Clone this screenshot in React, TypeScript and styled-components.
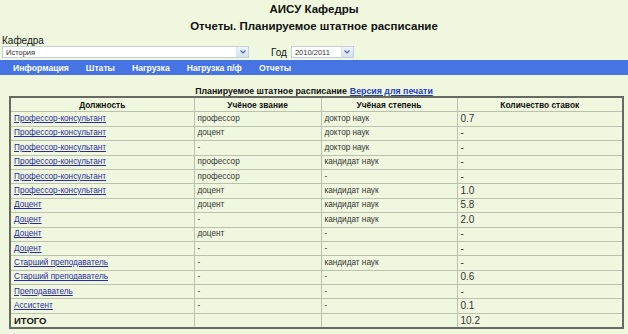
import styled, { createGlobalStyle } from 'styled-components';

const GlobalStyle = createGlobalStyle`
	html, body {
		margin: 0;
		padding: 0;
		background: #eff8de;
	}
	body {
		font-family: 'Liberation Sans', Arial, sans-serif;
		color: #222;
	}
`;

const Page = styled.div`
	width: 628px;
	height: 334px;
	overflow: hidden;
	background: #eff8de;
`;

const Title = styled.h1<{ $top: number }>`
	margin: ${(p) => p.$top}px 0 0;
	font-size: 11.5px;
	line-height: 14px;
	font-weight: bold;
	text-align: center;
	color: #111;
`;

const Filters = styled.div`
	display: flex;
	align-items: flex-end;
	gap: 22px;
	padding: 2px 0 0 2px;
`;

const Field = styled.div`
	display: flex;
	flex-direction: column;
`;

const InlineField = styled.div`
	display: flex;
	align-items: center;
	gap: 4px;
`;

const Label = styled.span`
	font-size: 10px;
	line-height: 11px;
	color: #111;
`;

const Select = styled.div<{ $width: number }>`
	width: ${(p) => p.$width}px;
	height: 12px;
	box-sizing: border-box;
	border: 1px solid #c4cfd8;
	background: #fff;
	display: flex;
	align-items: center;
	font-size: 7.5px;
	color: #333;
	padding-left: 3px;
	span {
		flex: 1;
	}
`;

const Arrow = styled.div`
	width: 11px;
	height: 10px;
	background: linear-gradient(#eef3fb, #d6e0f0);
	border-left: 1px solid #dde4ee;
	display: flex;
	align-items: center;
	justify-content: center;
	svg {
		display: block;
	}
`;

const Nav = styled.nav`
	margin-top: 2px;
	height: 15px;
	background: #4674e2;
	display: flex;
	align-items: center;
	gap: 17px;
	padding-left: 13px;
`;

const NavItem = styled.a`
	color: #fff;
	font-size: 8.6px;
	font-weight: bold;
	text-decoration: none;
`;

const Caption = styled.div`
	margin-top: 11px;
	text-align: center;
	font-size: 8.8px;
	line-height: 10px;
	font-weight: bold;
	color: #111;
	a {
		color: #1f3fc4;
		text-decoration: underline;
		margin-left: 3px;
	}
`;

const Table = styled.table`
	margin: 0 0 0 9px;
	width: 615px;
	border-collapse: collapse;
	border: 2px solid #666a60;
	table-layout: fixed;
	th,
	td {
		border: 1px solid #b9c2ae;
		height: 13.4px;
		padding: 0 3px;
		font-size: 8.2px;
		line-height: 12px;
		white-space: nowrap;
		overflow: hidden;
	}
	th {
		font-weight: bold;
		text-align: center;
		color: #111;
		font-size: 8.4px;
	}
	td {
		color: #333;
	}
	td a {
		color: #2a2aa6;
		text-decoration: underline;
	}
`;

const Num = styled.td`
	&& {
		font-size: 10px;
	}
`;

const Total = styled.td`
	&& {
		font-weight: bold;
		color: #111;
		font-size: 9.5px;
	}
`;

const rows: [string, string, string, string][] = [
	['Профессор-консультант', 'профессор', 'доктор наук', '0.7'],
	['Профессор-консультант', 'доцент', 'доктор наук', '-'],
	['Профессор-консультант', '-', 'доктор наук', '-'],
	['Профессор-консультант', 'профессор', 'кандидат наук', '-'],
	['Профессор-консультант', 'профессор', '-', '-'],
	['Профессор-консультант', 'доцент', 'кандидат наук', '1.0'],
	['Доцент', 'доцент', 'кандидат наук', '5.8'],
	['Доцент', '-', 'кандидат наук', '2.0'],
	['Доцент', 'доцент', '-', '-'],
	['Доцент', '-', '-', '-'],
	['Старший преподаватель', '-', 'кандидат наук', '-'],
	['Старший преподаватель', '-', '-', '0.6'],
	['Преподаватель', '-', '-', '-'],
	['Ассистент', '-', '-', '0.1'],
];

const ArrowIcon = () => (
	<Arrow>
		<svg width='6' height='4' viewBox='0 0 6 4'>
			<path d='M0.5 0.5 L3 3 L5.5 0.5' fill='none' stroke='#4d6a9c' strokeWidth='1.2' />
		</svg>
	</Arrow>
);

export default function App() {
	return (
		<Page>
			<GlobalStyle />
			<Title $top={2}>АИСУ Кафедры</Title>
			<Title $top={3}>Отчеты. Планируемое штатное расписание</Title>
			<Filters>
				<Field>
					<Label>Кафедра</Label>
					<Select $width={247}>
						<span>История</span>
						<ArrowIcon />
					</Select>
				</Field>
				<InlineField>
					<Label>Год</Label>
					<Select $width={63}>
						<span>2010/2011</span>
						<ArrowIcon />
					</Select>
				</InlineField>
			</Filters>
			<Nav>
				<NavItem href='#'>Информация</NavItem>
				<NavItem href='#'>Штаты</NavItem>
				<NavItem href='#'>Нагрузка</NavItem>
				<NavItem href='#'>Нагрузка п/ф</NavItem>
				<NavItem href='#'>Отчеты</NavItem>
			</Nav>
			<Caption>
				Планируемое штатное расписание
				<a href='#'>Версия для печати</a>
			</Caption>
			<Table>
				<colgroup>
					<col style={{ width: 184 }} />
					<col style={{ width: 127 }} />
					<col style={{ width: 136 }} />
					<col />
				</colgroup>
				<thead>
					<tr>
						<th>Должность</th>
						<th>Учёное звание</th>
						<th>Учёная степень</th>
						<th>Количество ставок</th>
					</tr>
				</thead>
				<tbody>
					{rows.map((r, i) => (
						<tr key={i}>
							<td>
								<a href='#'>{r[0]}</a>
							</td>
							<td>{r[1]}</td>
							<td>{r[2]}</td>
							<Num>{r[3]}</Num>
						</tr>
					))}
					<tr>
						<Total>ИТОГО</Total>
						<td></td>
						<td></td>
						<Num>10.2</Num>
					</tr>
				</tbody>
			</Table>
		</Page>
	);
}
